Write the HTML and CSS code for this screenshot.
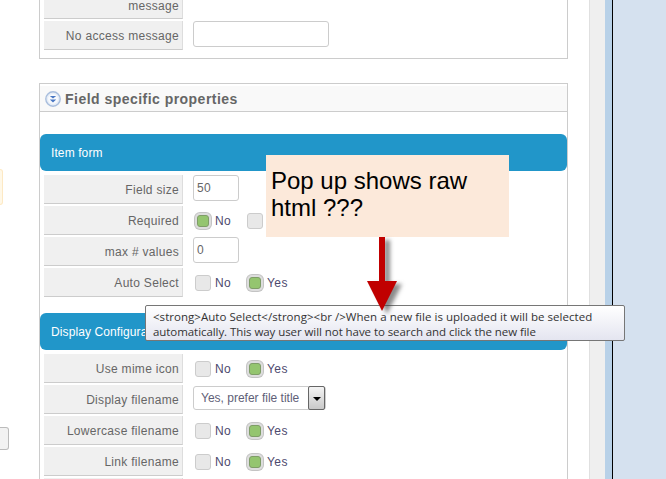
FILE: index.html
```html
<!DOCTYPE html>
<html lang="en">
<head>
    <meta charset="UTF-8">
    <title>Field specific properties</title>
    <link rel="stylesheet" href="styles.css">
</head>
<body>
    <div class="page">
        <div class="gutter">
            <div class="notice"></div>
            <div class="stub-button"></div>
        </div>
        <div class="content">
            <div class="panel panel-top">
                <div class="row row-cut">
                    <div class="label">message</div>
                </div>
                <div class="row">
                    <div class="label">No access message</div>
                    <div class="field"><input class="text-input wide" type="text"></div>
                </div>
            </div>

            <div class="panel panel-main">
                <div class="panel-head">
                    <svg class="toggle" width="16" height="16" viewBox="0 0 16 16">
                        <circle cx="8" cy="8" r="7.2" fill="#e6edf7" stroke="#a9bedd" stroke-width="1.4"/>
                        <circle cx="8" cy="8" r="5" fill="#f8fafd"/>
                        <path d="M4.8 5 L8 7.4 L11.2 5 Z M4.8 8.4 L8 11.4 L11.2 8.4 Z" fill="#4a78c4"/>
                    </svg>
                    <span>Field specific properties</span>
                </div>

                <div class="bar">Item form</div>
                <div class="row">
                    <div class="label">Field size</div>
                    <div class="field"><input class="text-input small" type="text" value="50"></div>
                </div>
                <div class="row">
                    <div class="label">Required</div>
                    <div class="field">
                        <span class="choice on"></span><span class="choice-text">No</span>
                        <span class="choice"></span><span class="choice-text">Yes</span>
                    </div>
                </div>
                <div class="row">
                    <div class="label">max # values</div>
                    <div class="field"><input class="text-input small" type="text" value="0"></div>
                </div>
                <div class="row">
                    <div class="label">Auto Select</div>
                    <div class="field">
                        <span class="choice"></span><span class="choice-text">No</span>
                        <span class="choice on"></span><span class="choice-text">Yes</span>
                    </div>
                </div>

                <div class="bar bar-second">Display Configuration</div>
                <div class="row">
                    <div class="label">Use mime icon</div>
                    <div class="field">
                        <span class="choice"></span><span class="choice-text">No</span>
                        <span class="choice on"></span><span class="choice-text">Yes</span>
                    </div>
                </div>
                <div class="row">
                    <div class="label">Display filename</div>
                    <div class="field">
                        <div class="select">
                            <span class="select-text">Yes, prefer file title</span>
                            <span class="select-btn"></span>
                        </div>
                    </div>
                </div>
                <div class="row">
                    <div class="label">Lowercase filename</div>
                    <div class="field">
                        <span class="choice"></span><span class="choice-text">No</span>
                        <span class="choice on"></span><span class="choice-text">Yes</span>
                    </div>
                </div>
                <div class="row">
                    <div class="label">Link filename</div>
                    <div class="field">
                        <span class="choice"></span><span class="choice-text">No</span>
                        <span class="choice on"></span><span class="choice-text">Yes</span>
                    </div>
                </div>
                <div class="row">
                    <div class="label"></div>
                </div>
            </div>
        </div>
        <div class="scroll-strip"></div>
        <div class="blue-strip"></div>
        <div class="desktop"></div>
    </div>

    <!-- annotation on top of the page -->
    <div class="callout">Pop up shows raw html ???</div>
    <svg class="arrow" width="50" height="90" viewBox="0 0 50 90">
        <path d="M15 0 L21 0 L21 44 L33 44 L18 74 L3 44 L15 44 Z" fill="#c00000"/>
    </svg>
    <div class="tooltip">
        <div class="tip-first">&lt;strong&gt;Auto Select&lt;/strong&gt;&lt;br /&gt;When a new file is uploaded it will be selected</div>
        <div class="tip-second">automatically. This way user will not have to search and click the new file</div>
    </div>
</body>
</html>
```

FILE: styles.css
```css
html, body {
    margin: 0;
    padding: 0;
    height: 479px;
    overflow: hidden;
    background: #fff;
}
body {
    font-family: "Liberation Sans", Arial, sans-serif;
    font-size: 12px;
    color: #666;
}
.page {
    display: flex;
    height: 479px;
    overflow: hidden;
}
.gutter {
    width: 39px;
    flex: none;
}
.notice {
    width: 2px;
    height: 34px;
    margin-top: 169px;
    background: #fff8e8;
    border: 1px solid #fde9c4;
    border-left: none;
    border-radius: 0 3px 3px 0;
}
.stub-button {
    width: 8px;
    height: 21px;
    margin-top: 222px;
    background: #f2f2f2;
    border: 1px solid #bbb;
    border-left: none;
    border-radius: 0 3px 3px 0;
}
.content {
    width: 529px;
    flex: none;
}
.panel {
    border: 1px solid #ccc;
    width: 527px;
}
.panel-top {
    border-top: none;
    padding: 0 0 6px 4px;
    width: 523px;
    margin-bottom: 24px;
}
.panel-main {
    height: 500px;
}
.panel-head {
    display: flex;
    align-items: center;
    gap: 4px;
    height: 25px;
    margin-top: 2px;
    padding-left: 5px;
    background: #f9f9f9;
    border-bottom: 1px solid #ccc;
    font-size: 14px;
    font-weight: bold;
    letter-spacing: 0.47px;
    color: #666;
}
.bar {
    height: 37px;
    line-height: 39px;
    margin: 22px 0 4px 0;
    padding-left: 11px;
    background: #2196c9;
    border-radius: 6px;
    color: #fff;
    font-size: 12px;
    letter-spacing: 0.1px;
}
.bar-second {
    margin-top: 16px;
}
.panel-main .row {
    margin-left: 4px;
}
.row {
    display: flex;
    margin-bottom: 2px;
}
.row-cut .label {
    height: 18px;
    line-height: 12px;
}
.label {
    width: 135px;
    height: 28px;
    line-height: 30px;
    padding-right: 3px;
    text-align: right;
    background: #f0f0f0;
    border-bottom: 1px solid #ccc;
    border-right: 1px solid #ddd;
    letter-spacing: 0.3px;
    color: #666;
    flex: none;
}
.field {
    display: flex;
    align-items: center;
    height: 26px;
    margin-left: 10px;
}
.text-input {
    box-sizing: border-box;
    height: 26px;
    padding: 0 3px;
    border: 1px solid #ccc;
    border-radius: 3px;
    background: #fff;
    font-family: inherit;
    font-size: 12px;
    letter-spacing: 0.4px;
    color: #666;
}
.wide {
    width: 136px;
}
.small {
    width: 46px;
}
.choice {
    box-sizing: border-box;
    width: 16px;
    height: 16px;
    margin: 4px 4px 0 2px;
    background: #e8e8e8;
    border: 1px solid #ccc;
    border-radius: 3px;
}
.choice.on {
    background: #94c56f;
    border: 1px solid #7f9d68;
    box-shadow: 0 0 0 2px #ddd, 0 0 0 3px #c4c4c4;
    width: 12px;
    height: 12px;
    margin: 4px 6px 0 4px;
}
.choice-text {
    width: 30px;
    margin-top: 4px;
    letter-spacing: 0.4px;
    color: #4d4a6e;
}
.select {
    display: flex;
    align-items: center;
    justify-content: space-between;
    box-sizing: border-box;
    width: 133px;
    height: 24px;
    padding-left: 7px;
    border: 1px solid #ccc;
    border-radius: 3px;
    background: #fff;
}
.select-text {
    color: #5f5f78;
}
.select-btn {
    position: relative;
    box-sizing: border-box;
    width: 17px;
    height: 24px;
    border: 1px solid #666;
    border-radius: 2px;
    background: linear-gradient(#f4f4f4, #c8c8c8);
}
.select-btn::after {
    content: "";
    position: absolute;
    left: 4px;
    top: 10px;
    border: 4px solid transparent;
    border-bottom: none;
    border-top: 4px solid #000;
}
.scroll-strip {
    width: 16px;
    margin-left: 21px;
    background: #efefef;
    border-left: 1px solid #e0e0e0;
    box-sizing: border-box;
    flex: none;
}
.blue-strip {
    width: 8px;
    background: #b8d1e8;
    border-right: 1px solid #000;
    box-sizing: border-box;
    flex: none;
}
.desktop {
    flex: 1;
    background: #d5e1ef;
}
.callout {
    position: absolute;
    left: 266px;
    top: 155px;
    box-sizing: border-box;
    width: 243px;
    height: 82px;
    padding: 12px 30px 12px 5px;
    background: #fce9da;
    color: #000;
    font-size: 24px;
    line-height: 27px;
}
.arrow {
    position: absolute;
    left: 364px;
    top: 237px;
    filter: drop-shadow(5px 3px 2px rgba(60, 60, 60, 0.6));
    z-index: 3;
}
.tooltip {
    position: absolute;
    left: 145px;
    top: 305px;
    box-sizing: border-box;
    width: 480px;
    height: 36px;
    padding: 3px 7px;
    background: linear-gradient(#fff, #e4e5f0);
    border: 1px solid #767676;
    border-radius: 2px;
    font-family: "Open Sans", sans-serif;
    font-size: 11.5px;
    line-height: 15px;
    white-space: nowrap;
    color: #333;
    z-index: 2;
}
.tip-first {
    letter-spacing: 0.035px;
}
.tip-second {
    letter-spacing: -0.067px;
}
```
